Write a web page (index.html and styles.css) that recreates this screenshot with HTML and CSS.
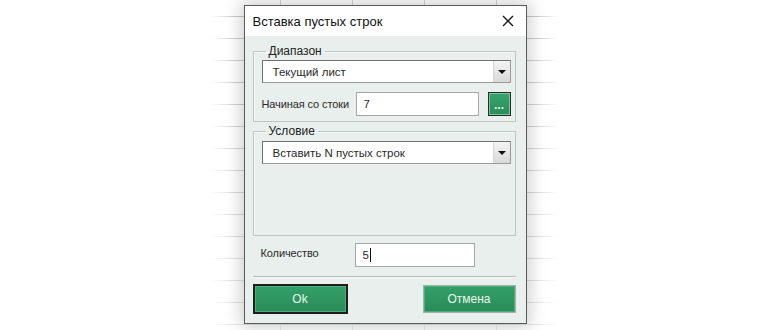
FILE: index.html
```html
<!DOCTYPE html>
<html lang="ru">
<head>
<meta charset="UTF-8" />
<meta name="viewport" content="width=device-width, initial-scale=1" />
<title>Вставка пустых строк</title>
<link rel="stylesheet" href="styles.css">
</head>
<body>
<div class="sheet">
  <div class="dialog">
    <div class="titlebar">
      <span class="title">Вставка пустых строк</span>
      <svg class="close" width="12" height="12" viewBox="0 0 12 12">
        <path d="M1 1 L11 11 M11 1 L1 11" stroke="#1a1a1a" stroke-width="1.4" fill="none" />
      </svg>
    </div>
    <div class="body">
      <fieldset class="group group-range">
        <legend>Диапазон</legend>
        <div class="combo"><span>Текущий лист</span><span class="combo-arrow"></span></div>
        <div class="row">
          <label class="label">Начиная со стоки</label>
          <div class="input input-start">7</div>
          <button class="pick">...</button>
        </div>
      </fieldset>

      <fieldset class="group group-cond">
        <legend>Условие</legend>
        <div class="combo"><span>Вставить N пустых строк</span><span class="combo-arrow"></span></div>
      </fieldset>

      <div class="row row-count">
        <label class="label">Количество</label>
        <div class="input input-count">5<span class="caret"></span></div>
      </div>

      <div class="separator"></div>

      <div class="actions">
        <button class="btn btn-ok">Ok</button>
        <button class="btn">Отмена</button>
      </div>
    </div>
  </div>
</div>
</body>
</html>
```

FILE: styles.css
```css
body {
  margin: 0;
  background: #fff;
  font-family: "Liberation Sans", Arial, sans-serif;
  font-size: 11.5px;
  color: #2a2a2a;
}
.sheet {
  width: 348px;
  height: 330px;
  margin: 0 auto;
  display: flex;
  justify-content: center;
  align-items: flex-start;
  background:
    linear-gradient(90deg, #fff 0, rgba(255,255,255,0) 24px, rgba(255,255,255,0) calc(100% - 24px), #fff 100%),
    linear-gradient(rgba(255,255,255,0), rgba(255,255,255,0.55)),
    repeating-linear-gradient(90deg, transparent 0, transparent 69px, #d4d4d4 69px, #d4d4d4 70px, transparent 70px, transparent 72px),
    repeating-linear-gradient(180deg, transparent 0, transparent 16px, #c9c9c9 16px, #c9c9c9 17px, transparent 17px, transparent 22px);
}
.dialog {
  width: 283px;
  height: 319px;
  margin-top: 5px;
  box-sizing: border-box;
  border: 1px solid #5a5a5a;
  background: #e9efec;
  box-shadow: 0 0 16px 3px rgba(0,0,0,0.2);
  display: flex;
  flex-direction: column;
}
.titlebar {
  height: 30px;
  flex-shrink: 0;
  background: #fff;
  display: flex;
  align-items: center;
  justify-content: space-between;
  padding: 0 12px 0 8px;
}
.title {
  font-size: 13px;
  color: #111;
}
.body {
  padding: 7px 10px 0 8px;
}
.group {
  margin: 0;
  padding: 1px 4px 5px 8px;
  border: 1px solid #bfc5c2;
  box-shadow: inset 1px 1px 0 #f7f9f8;
}
.group legend {
  margin-left: 4px;
  padding: 0 3px;
  line-height: 16px;
  font-size: 12px;
  color: #222;
}
.group-cond {
  margin-top: 1px;
  padding-top: 2px;
  height: 113px;
  box-sizing: border-box;
}
.combo {
  height: 23px;
  box-sizing: border-box;
  border: 1px solid #9a9a9a;
  border-top-color: #707070;
  border-left-color: #707070;
  background: #fff;
  display: flex;
  align-items: center;
  justify-content: space-between;
  padding-left: 10px;
}
.combo-arrow {
  width: 17px;
  height: 100%;
  box-sizing: border-box;
  border-left: 1px solid #d6d6d6;
  background: linear-gradient(#f4f4f4, #d9d9d9);
  display: flex;
  align-items: center;
  justify-content: center;
}
.combo-arrow::after {
  content: "";
  border-left: 4px solid transparent;
  border-right: 4px solid transparent;
  border-top: 4px solid #111;
}
.row {
  display: flex;
  align-items: center;
  margin-top: 9px;
}
.label {
  width: 94px;
  flex-shrink: 0;
  white-space: nowrap;
  font-size: 11px;
  letter-spacing: -0.1px;
}
.input {
  height: 24px;
  box-sizing: border-box;
  border: 1px solid #a7a7a7;
  background: #fff;
  display: flex;
  align-items: center;
  padding-left: 7px;
}
.input-start {
  width: 123px;
}
.pick {
  width: 23px;
  height: 24px;
  margin-left: 9px;
  padding: 0 0 3px;
  box-sizing: border-box;
  border: 1px solid #2a2a2a;
  background: linear-gradient(#36a56c, #2b8c59);
  box-shadow: inset 0 0 0 1px #7cc49d;
  color: #e7f6ee;
  font-family: "Liberation Sans", Arial, sans-serif;
  font-size: 12px;
  font-weight: bold;
  display: flex;
  align-items: flex-end;
  justify-content: center;
}
.row-count {
  margin-top: 7px;
  padding-left: 8px;
}
.row-count .label {
  margin-top: -5px;
}
.input-count {
  width: 120px;
}
.caret {
  display: inline-block;
  width: 1px;
  height: 14px;
  margin-left: 1px;
  background: #111;
}
.separator {
  height: 1px;
  margin-top: 9px;
  background: #b8bebb;
  border-bottom: 1px solid #f6f8f7;
}
.actions {
  display: flex;
  justify-content: space-between;
  margin-top: 7px;
}
.btn {
  width: 93px;
  height: 28px;
  border: 1px solid #9fb2a8;
  background: linear-gradient(#33a068, #2a8b58);
  box-shadow: inset 0 0 0 1px #4fae7e;
  color: #e8f6ee;
  font-family: "Liberation Sans", Arial, sans-serif;
  font-size: 12px;
  cursor: pointer;
}
.btn-ok {
  width: 95px;
  height: 30px;
  margin-top: -1px;
  border: 2px solid #1e1e1e;
}
```
